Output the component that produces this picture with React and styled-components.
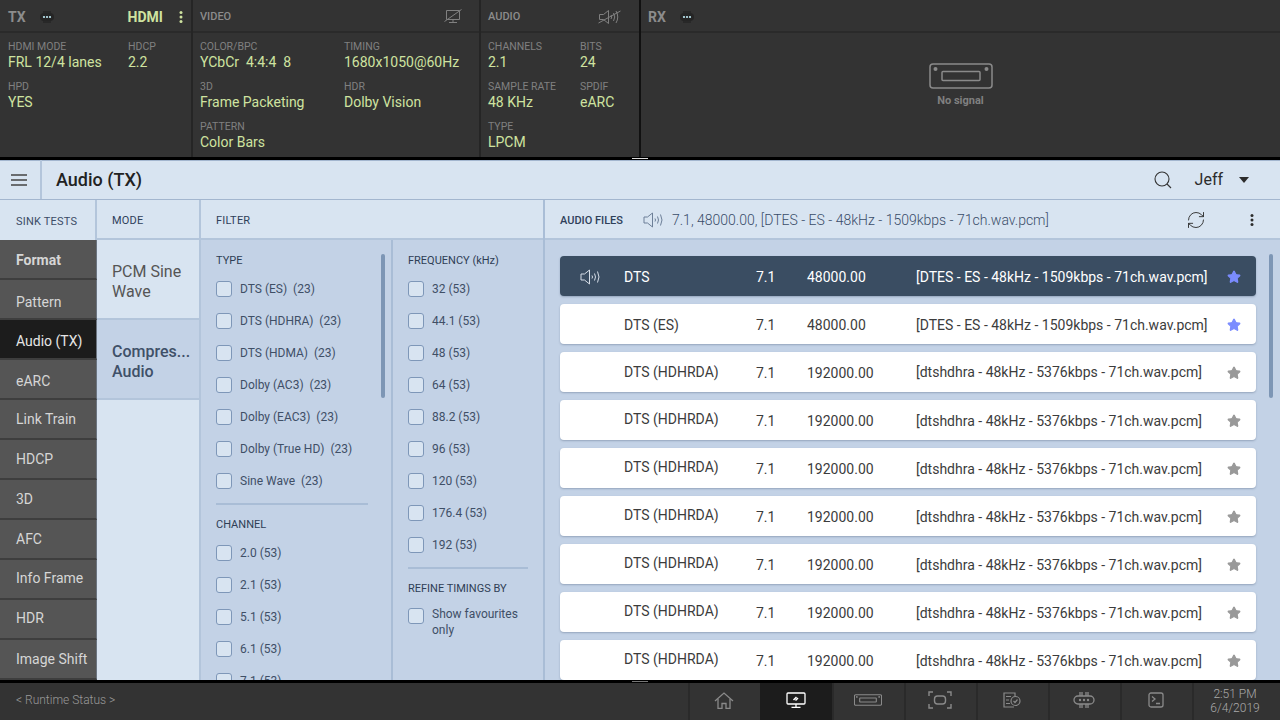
import styled, { createGlobalStyle } from "styled-components";
import { RefreshCw, Star } from "lucide-react";

const GlobalStyle = createGlobalStyle`
  html, body {
    margin: 0;
    padding: 0;
    background: #333;
  }
  body {
    font-family: Roboto, "Liberation Sans", sans-serif;
  }
  * {
    box-sizing: border-box;
  }
`;

const sinkTests = [
  { name: "Format", bold: true, shift: 1 },
  { name: "Pattern", shift: 3 },
  { name: "Audio (TX)", active: true, shift: 2 },
  { name: "eARC", shift: 2 },
  { name: "Link Train", shift: 0 },
  { name: "HDCP", shift: 0 },
  { name: "3D", shift: 0 },
  { name: "AFC", shift: 0 },
  { name: "Info Frame", shift: -1 },
  { name: "HDR", shift: -1 },
  { name: "Image Shift", shift: 0 },
];

const typeFilters = ["DTS (ES)  (23)", "DTS (HDHRA)  (23)", "DTS (HDMA)  (23)", "Dolby (AC3)  (23)", "Dolby (EAC3)  (23)", "Dolby (True HD)  (23)", "Sine Wave  (23)"];
const channelFilters = ["2.0 (53)", "2.1 (53)", "5.1 (53)", "6.1 (53)", "7.1 (53)"];
const freqFilters = ["32 (53)", "44.1 (53)", "48 (53)", "64 (53)", "88.2 (53)", "96 (53)", "120 (53)", "176.4 (53)", "192 (53)"];

const hdhrda = {
  name: "DTS (HDHRDA)",
  freq: "192000.00",
  file: "[dtshdhra - 48kHz - 5376kbps - 71ch.wav.pcm]",
};

const files = [
  { name: "DTS", freq: "48000.00", file: "[DTES - ES - 48kHz - 1509kbps - 71ch.wav.pcm]", selected: true, fav: true, lift: 0 },
  { name: "DTS (ES)", freq: "48000.00", file: "[DTES - ES - 48kHz - 1509kbps - 71ch.wav.pcm]", fav: true, lift: 0 },
  { ...hdhrda, lift: 2 },
  { ...hdhrda, lift: 4 },
  { ...hdhrda, lift: 4 },
  { ...hdhrda, lift: 4 },
  { ...hdhrda, lift: 4 },
  { ...hdhrda, lift: 4 },
  { ...hdhrda, lift: 4 },
];

/* drawings */
const ChipIcon = () => (
  <svg width="20" height="14" viewBox="0 0 20 14">
    <path d="M7 1v3M9 1v3M11 1v3M13 1v3M7 10v3M9 10v3M11 10v3M13 10v3" stroke="#222" strokeWidth="1.2" />
    <rect x="3" y="3" width="14" height="8" rx="4" fill="#252525" />
    <circle cx="7" cy="7" r="1.1" fill="#bfeaf5" />
    <circle cx="10" cy="7" r="1.1" fill="#bfeaf5" />
    <circle cx="13" cy="7" r="1.1" fill="#bfeaf5" />
  </svg>
);

const Kebab = ({ color }) => (
  <KebabSvg width="4" height="12" viewBox="0 0 4 12" fill={color}>
    <circle cx="2" cy="1.500" r="1.500" />
    <circle cx="2" cy="6" r="1.500" />
    <circle cx="2" cy="10.500" r="1.500" />
  </KebabSvg>
);

const MenuIcon = () => (
  <svg width="16" height="12" viewBox="0 0 16 12" stroke="#444" strokeWidth="1.500">
    <path d="M0 1h16M0 6h16M0 11h16" />
  </svg>
);

const SearchIcon = () => (
  <svg width="18" height="18" viewBox="0 0 18 18" fill="none" stroke="#333" strokeWidth="1.100">
    <circle cx="8" cy="8" r="7" />
    <path d="M13 13l4 4" />
  </svg>
);

const MutedMonitor = () => (
  <svg width="18" height="15" viewBox="0 0 18 15" fill="none" stroke="#808080" strokeWidth="1">
    <path d="M15.500 1.500H2.500v9h13z" />
    <path d="M9 10.500v3M5 13.500h8" />
    <path d="M0.500 12.500L17.500 0.500" />
  </svg>
);

const MutedSpeaker = () => (
  <svg width="23" height="16" viewBox="0 0 23 16" fill="none" stroke="#808080" strokeWidth="1">
    <path d="M1.500 5.500h4L10.500 1.500v13l-5-4h-4z" />
    <path d="M13 6q1.500 2 0 4M15.500 4q2.500 4 0 8M18 2q3.500 6 0 12" />
    <path d="M0.500 14L22.500 2" />
  </svg>
);

const Speaker = ({ color }) => (
  <svg width="22" height="16" viewBox="0 0 22 16" fill="none" stroke={color} strokeWidth="1">
    <path d="M1 5h3.500L9.500 1v14l-5-4H1z" />
    <path d="M12 6.500q1 1.500 0 3M14.500 4.500q2 3.500 0 7M17.500 2.500q3 5.500 0 11" />
  </svg>
);

const HdmiPort = ({ width, height, stroke }) => (
  <svg width={width} height={height} viewBox="0 0 64 26" fill="none" stroke="#8a8a8a" strokeWidth={stroke}>
    <rect x="1" y="1" width="62" height="24" rx="3" />
    <rect x="13" y="8.500" width="38" height="9" rx="1" />
    <g fill="#8a8a8a" stroke="none">
      <circle cx="6.500" cy="6" r="2" />
      <circle cx="57.500" cy="6" r="2" />
    </g>
  </svg>
);

const HomeIcon = () => (
  <svg width="20" height="17" viewBox="0 0 20 17" fill="none" stroke="#8a8a8a" strokeWidth="1.300">
    <path d="M1 9l9-8 9 8" />
    <path d="M4 7v9.500h4v-5h4v5h4V7" />
  </svg>
);

const MonitorIcon = () => (
  <svg width="20" height="16" viewBox="0 0 20 16" fill="none" stroke="#fff" strokeWidth="1.300">
    <rect x="1" y="1" width="18" height="11" rx="1" />
    <path d="M10 12v3M5.500 15.300h9" />
    <path d="M7.500 8l3-3M9.500 8.500l2.500-2.500" strokeWidth="1.500" />
  </svg>
);

const CaptureIcon = () => (
  <svg width="24" height="18" viewBox="0 0 24 18" fill="none" stroke="#8a8a8a" strokeWidth="1.400">
    <path d="M1 5V1h4M19 1h4v4M23 13v4h-4M5 17H1v-4" />
    <rect x="6.500" y="5" width="11" height="8" rx="3" />
  </svg>
);

const ReportIcon = () => (
  <svg width="18" height="16" viewBox="0 0 18 16" fill="none" stroke="#8a8a8a" strokeWidth="1.200">
    <path d="M12 4V1H1v14h10" />
    <path d="M3 4.500h5M3 8h3M3 11.500h4" />
    <circle cx="12.500" cy="9" r="4.500" />
    <path d="M10.500 9l1.500 1.500 2.500-3" />
  </svg>
);

const PortIcon = () => (
  <svg width="22" height="18" viewBox="0 0 22 18" fill="none" stroke="#8a8a8a" strokeWidth="1.300">
    <path d="M7 1v4M9 1v4M13 1v4M15 1v4M7 13v4M9 13v4M13 13v4M15 13v4" />
    <rect x="1" y="5" width="20" height="8" rx="4" />
    <g fill="#8a8a8a" stroke="none">
      <circle cx="7" cy="9" r="1.200" />
      <circle cx="11" cy="9" r="1.200" />
      <circle cx="15" cy="9" r="1.200" />
    </g>
  </svg>
);

const TerminalIcon = () => (
  <svg width="16" height="16" viewBox="0 0 16 16" fill="none" stroke="#8a8a8a" strokeWidth="1.300">
    <rect x="1" y="1" width="14" height="14" rx="2" />
    <path d="M4 4.500L7 7 4 9.500M8 11.500h4" />
  </svg>
);

const CaretDown = () => (
  <svg width="10" height="6" viewBox="0 0 10 6" fill="#2c2c2c">
    <path d="M0 0h10L5 6z" />
  </svg>
);

const App = () => (
  <Page>
    <GlobalStyle />
    <StatusPanel>
      <StatusColumn $width={191}>
        <StatusHead $pad={8} $end={8}>
          <PortName>TX</PortName>
          <ChipSlot>
            <ChipIcon />
          </ChipSlot>
          <HdmiTag>HDMI</HdmiTag>
          <Kebab color="#cfe3a0" />
        </StatusHead>
        <InfoGrid $pad={8} $first={120}>
          <Info label="HDMI MODE" value="FRL 12/4 lanes" />
          <Info label="HDCP" value="2.2" />
          <Info label="HPD" value="YES" />
        </InfoGrid>
      </StatusColumn>
      <StatusColumn $width={288} $line="#252525">
        <StatusHead $pad={7} $end={17}>
          <SectionName>VIDEO</SectionName>
          <MutedMonitor />
        </StatusHead>
        <InfoGrid $pad={7} $first={144}>
          <Info label="COLOR/BPC" value="YCbCr  4:4:4  8" />
          <Info label="TIMING" value="1680x1050@60Hz" />
          <Info label="3D" value="Frame Packeting" />
          <Info label="HDR" value="Dolby Vision" />
          <Info label="PATTERN" value="Color Bars" />
        </InfoGrid>
      </StatusColumn>
      <StatusColumn $width={160} $line="#252525">
        <StatusHead $pad={7} $end={18}>
          <SectionName>AUDIO</SectionName>
          <MutedSpeaker />
        </StatusHead>
        <InfoGrid $pad={7} $first={92}>
          <Info label="CHANNELS" value="2.1" />
          <Info label="BITS" value="24" />
          <Info label="SAMPLE RATE" value="48 KHz" />
          <Info label="SPDIF" value="eARC" />
          <Info label="TYPE" value="LPCM" />
        </InfoGrid>
      </StatusColumn>
      <StatusColumn $width={641} $line="#111">
        <StatusHead $pad={7} $end={17}>
          <PortName>RX</PortName>
          <ChipSlot>
            <ChipIcon />
          </ChipSlot>
        </StatusHead>
        <NoSignal>
          <HdmiPort width={64} height={26} stroke={1.500} />
          <NoSignalText>No signal</NoSignalText>
        </NoSignal>
      </StatusColumn>
      <Handle $color="#ddd" />
    </StatusPanel>

    <Main>
      <TitleBar>
        <MenuButton>
          <MenuIcon />
        </MenuButton>
        <Title>Audio (TX)</Title>
        <SearchIcon />
        <UserName>Jeff</UserName>
        <CaretDown />
      </TitleBar>

      <Columns>
        <SinkColumn>
          <SinkHead>SINK TESTS</SinkHead>
          {sinkTests.map((t) => (
            <SinkItem key={t.name} $active={t.active} $bold={t.bold} $shift={t.shift}>
              {t.name}
            </SinkItem>
          ))}
        </SinkColumn>

        <ModeColumn>
          <ColumnHead>MODE</ColumnHead>
          <ModeItem>PCM Sine Wave</ModeItem>
          <ModeItem $active>
            Compres...
            <br />
            Audio
          </ModeItem>
        </ModeColumn>

        <FilterColumn>
          <ColumnHead>FILTER</ColumnHead>
          <FilterPanes>
            <FilterPane $width={192}>
              <GroupTitle>TYPE</GroupTitle>
              {typeFilters.map((f) => (
                <CheckRow key={f} label={f} />
              ))}
              <GroupDivider $width={152} />
              <GroupTitle>CHANNEL</GroupTitle>
              {channelFilters.map((f) => (
                <CheckRow key={f} label={f} />
              ))}
              <ScrollThumb $right={6} />
            </FilterPane>
            <FilterPane $width={150}>
              <GroupTitle>FREQUENCY (kHz)</GroupTitle>
              {freqFilters.map((f) => (
                <CheckRow key={f} label={f} />
              ))}
              <GroupDivider $width={120} />
              <GroupTitle>REFINE TIMINGS BY</GroupTitle>
              <FavRow>
                <CheckBox />
                <FavText>Show favourites only</FavText>
              </FavRow>
            </FilterPane>
          </FilterPanes>
        </FilterColumn>

        <FilesColumn>
          <FilesHead>
            <HeadLabel>AUDIO FILES</HeadLabel>
            <Speaker color="#6d7f98" />
            <NowPlaying>7.1, 48000.00, [DTES - ES - 48kHz - 1509kbps - 71ch.wav.pcm]</NowPlaying>
            <RefreshSlot>
              <RefreshCw size={20} strokeWidth={1.1} color="#2c2c2c" />
            </RefreshSlot>
            <Kebab color="#2c2c2c" />
          </FilesHead>
          <FileList>
            {files.map((f, i) => (
              <FileRow key={i} $selected={f.selected}>
                <SpeakerCell>{f.selected && <Speaker color="#d6dee8" />}</SpeakerCell>
                <NameCell $lift={f.lift}>{f.name}</NameCell>
                <span>7.1</span>
                <span>{f.freq}</span>
                <FileCell $lift={i === 2 ? f.lift : 0}>{f.file}</FileCell>
                <StarCell>
                  <Star size={14} fill={f.fav ? "#7b8cff" : "#999"} color={f.fav ? "#7b8cff" : "#999"} />
                </StarCell>
              </FileRow>
            ))}
            <ScrollThumb $right={7} />
          </FileList>
        </FilesColumn>
      </Columns>
      <Handle $color="#777" />
    </Main>

    <Footer>
      <RuntimeStatus>&lt; Runtime Status &gt;</RuntimeStatus>
      <NavCell><HomeIcon /></NavCell>
      <NavCell $active><MonitorIcon /></NavCell>
      <NavCell><HdmiPort width={28} height={12} stroke={2.600} /></NavCell>
      <NavCell><CaptureIcon /></NavCell>
      <NavCell><ReportIcon /></NavCell>
      <NavCell><PortIcon /></NavCell>
      <NavCell><TerminalIcon /></NavCell>
      <Clock>
        2:51 PM
        <br />
        6/4/2019
      </Clock>
    </Footer>
  </Page>
);

const Info = ({ label, value }) => (
  <InfoCell>
    <InfoLabel>{label}</InfoLabel>
    <InfoValue>{value}</InfoValue>
  </InfoCell>
);

const CheckRow = ({ label }) => (
  <CheckLine>
    <CheckBox />
    <CheckText>{label}</CheckText>
  </CheckLine>
);

const KebabSvg = styled.svg`
  flex: none;
`;

const Page = styled.div`
  width: 1280px;
  height: 720px;
  display: flex;
  flex-direction: column;
  overflow: hidden;
`;

const StatusPanel = styled.div`
  position: relative;
  height: 160px;
  flex: none;
  display: flex;
  background: #333;
  border-bottom: 3px solid #000;
`;

const StatusColumn = styled.div`
  width: ${(p) => p.$width}px;
  flex: none;
  display: flex;
  flex-direction: column;
  border-left: ${(p) => (p.$line ? `2px solid ${p.$line}` : "0")};
`;

const StatusHead = styled.div`
  height: 33px;
  flex: none;
  display: flex;
  align-items: center;
  padding: 2px ${(p) => p.$end}px 0 ${(p) => p.$pad}px;
  border-bottom: 2px solid #2a2a2a;
`;

const PortName = styled.span`
  font-size: 14px;
  font-weight: 700;
  color: #8c8c8c;
`;

const ChipSlot = styled.span`
  display: flex;
  width: 20px;
  margin-left: 11px;
`;

const HdmiTag = styled.span`
  font-size: 14px;
  font-weight: 700;
  color: #cfe3a0;
  margin-left: 71px;
  margin-right: 16px;
`;

const SectionName = styled.span`
  flex: 1;
  font-size: 11px;
  font-weight: 500;
  color: #8c8c8c;
`;

const InfoGrid = styled.div`
  display: grid;
  grid-template-columns: ${(p) => p.$first}px 1fr;
  grid-auto-rows: 40px;
  padding: 8px 0 0 ${(p) => p.$pad}px;
`;

const InfoCell = styled.div`
  display: flex;
  flex-direction: column;
`;

const InfoLabel = styled.span`
  font-size: 10.5px;
  line-height: 12px;
  color: #808080;
`;

const InfoValue = styled.span`
  font-size: 14px;
  line-height: 18px;
  color: #cfe3a0;
  white-space: pre;
`;

const NoSignal = styled.div`
  display: flex;
  flex-direction: column;
  align-items: center;
  padding-top: 30px;
`;

const NoSignalText = styled.span`
  margin-top: 5px;
  font-size: 11px;
  font-weight: 700;
  color: #808080;
`;

const Handle = styled.span`
  position: absolute;
  left: 632px;
  bottom: -2px;
  width: 16px;
  height: 1px;
  background: ${(p) => p.$color};
`;

const Main = styled.div`
  position: relative;
  flex: 1;
  min-height: 0;
  display: flex;
  flex-direction: column;
  background: #d8e4f1;
`;

const TitleBar = styled.div`
  height: 40px;
  flex: none;
  display: flex;
  align-items: center;
  padding-right: 31px;
  border-bottom: 1px solid #a3b6cf;
  box-shadow: inset 0 1px 0 #a3b6cf;
`;

const MenuButton = styled.div`
  width: 42px;
  height: 39px;
  flex: none;
  display: flex;
  align-items: center;
  justify-content: center;
  padding-right: 2px;
  border-right: 2px solid #b3c5db;
`;

const Title = styled.h1`
  flex: 1;
  margin: 0 0 0 14px;
  font-size: 18px;
  font-weight: 500;
  color: #222;
`;

const UserName = styled.span`
  margin: 0 16px 0 23px;
  font-size: 16px;
  color: #2c2c2c;
`;

const Columns = styled.div`
  flex: 1;
  min-height: 0;
  display: flex;
`;

const ColumnHead = styled.div`
  height: 40px;
  flex: none;
  display: flex;
  align-items: center;
  padding: 2px 0 0 15px;
  font-size: 11px;
  letter-spacing: 0.2px;
  color: #2f405a;
  border-bottom: 2px solid #b3c5db;
`;

const SinkColumn = styled.div`
  width: 97px;
  flex: none;
  display: flex;
  flex-direction: column;
  overflow: hidden;
`;

const SinkHead = styled.div`
  height: 40px;
  flex: none;
  display: flex;
  align-items: center;
  padding: 3px 0 0 16px;
  font-size: 11px;
  letter-spacing: 0.2px;
  color: #3c4c66;
  border-right: 2px solid #b3c5db;
`;

const SinkItem = styled.div`
  height: 40px;
  flex: none;
  display: flex;
  align-items: center;
  padding-left: 16px;
  padding-top: ${(p) => Math.max(p.$shift, 0) * 2}px;
  padding-bottom: ${(p) => Math.max(-p.$shift, 0) * 2}px;
  font-size: 14px;
  font-weight: ${(p) => (p.$bold ? 700 : 400)};
  color: ${(p) => (p.$active ? "#e6e6e6" : "#d6d6d6")};
  background: ${(p) => (p.$active ? "#1c1c1c" : "#555")};
  border-bottom: 2px solid #3e3e3e;
  border-right: 1px solid #6b7480;
`;

const ModeColumn = styled.div`
  width: 104px;
  flex: none;
  display: flex;
  flex-direction: column;
  border-right: 2px solid #b3c5db;
`;

const ModeItem = styled.div`
  height: 80px;
  flex: none;
  display: flex;
  align-items: center;
  padding: 6px 3px 0 15px;
  font-size: 16px;
  line-height: 20px;
  font-weight: ${(p) => (p.$active ? 500 : 400)};
  color: ${(p) => (p.$active ? "#3f5068" : "#555")};
  background: ${(p) => (p.$active ? "#c3d2e6" : "transparent")};
  border-bottom: 2px solid #b3c5db;
`;

const FilterColumn = styled.div`
  width: 344px;
  flex: none;
  display: flex;
  flex-direction: column;
  min-height: 0;
  border-right: 2px solid #a9bdd6;
`;

const FilterPanes = styled.div`
  flex: 1;
  min-height: 0;
  display: flex;
  background: #c3d2e6;
`;

const FilterPane = styled.div`
  position: relative;
  width: ${(p) => p.$width}px;
  flex: none;
  overflow: hidden;
  padding: 13px 0 0 15px;
  &:first-child {
    border-right: 2px solid #a9bdd6;
  }
`;

const GroupTitle = styled.div`
  font-size: 11px;
  line-height: 16px;
  font-weight: 400;
  color: #2f3e55;
  margin-bottom: 4px;
`;

const CheckLine = styled.div`
  height: 32px;
  display: flex;
  align-items: center;
  gap: 8px;
`;

const CheckBox = styled.span`
  width: 16px;
  height: 16px;
  flex: none;
  border-radius: 3px;
  background: #d8e4f1;
  border: 1px solid #7e97b8;
`;

const CheckText = styled.span`
  font-size: 12px;
  color: #3f4f66;
  white-space: pre;
`;

const GroupDivider = styled.div`
  width: ${(p) => p.$width}px;
  height: 2px;
  margin: 6px 0 12px;
  background: #a9bdd6;
`;

const FavRow = styled.div`
  display: flex;
  gap: 8px;
  padding-top: 7px;
`;

const FavText = styled.span`
  margin-top: -2px;
  font-size: 12px;
  line-height: 16px;
  color: #3f4f66;
  width: 96px;
`;

const ScrollThumb = styled.span`
  position: absolute;
  top: 14px;
  right: ${(p) => p.$right}px;
  width: 4px;
  height: 144px;
  border-radius: 2px;
  background: #7d96b5;
`;

const FilesColumn = styled.div`
  flex: 1;
  min-width: 0;
  display: flex;
  flex-direction: column;
`;

const FilesHead = styled.div`
  height: 40px;
  flex: none;
  display: flex;
  align-items: center;
  padding: 2px 26px 0 15px;
  border-bottom: 2px solid #b3c5db;
`;

const HeadLabel = styled.span`
  font-size: 11px;
  font-weight: 500;
  color: #2f405a;
  margin-right: 20px;
`;

const NowPlaying = styled.span`
  flex: 1;
  margin-left: 7px;
  font-size: 14px;
  font-weight: 300;
  color: #3a4d69;
`;

const RefreshSlot = styled.span`
  display: flex;
  margin-right: 44px;
`;

const FileList = styled.div`
  position: relative;
  flex: 1;
  min-height: 0;
  overflow: hidden;
  display: flex;
  flex-direction: column;
  gap: 8px;
  padding: 16px 0 0 15px;
  background: #c3d2e6;
`;

const FileRow = styled.div`
  width: 696px;
  height: 40px;
  flex: none;
  display: grid;
  grid-template-columns: 64px 132px 51px 109px 1fr 44px;
  align-items: center;
  padding-top: 2px;
  border-radius: 4px;
  font-size: 14px;
  color: ${(p) => (p.$selected ? "#fff" : "#3c3c3c")};
  background: ${(p) => (p.$selected ? "#3a4d62" : "#fff")};
  box-shadow: 0 1px 2px rgba(60, 80, 110, 0.35);
`;

const SpeakerCell = styled.span`
  display: flex;
  padding-left: 20px;
`;

const NameCell = styled.span`
  padding-bottom: ${(p) => p.$lift}px;
`;

const FileCell = styled.span`
  white-space: nowrap;
  padding-bottom: ${(p) => p.$lift}px;
`;

const StarCell = styled.span`
  display: flex;
  justify-content: center;
`;

const Footer = styled.div`
  height: 40px;
  flex: none;
  display: flex;
  align-items: center;
  background: #333;
  border-top: 3px solid #000;
`;

const RuntimeStatus = styled.span`
  width: 688px;
  flex: none;
  padding: 0 0 3px 16px;
  font-size: 12px;
  font-weight: 300;
  color: #999;
`;

const NavCell = styled.div`
  width: 72px;
  height: 37px;
  flex: none;
  display: flex;
  align-items: center;
  justify-content: center;
  padding-bottom: 3px;
  background: ${(p) => (p.$active ? "#1c1c1c" : "transparent")};
  box-shadow: inset 2px 0 0 ${(p) => (p.$active ? "#1c1c1c" : "#2a2a2a")};
`;

const Clock = styled.div`
  flex: 1;
  height: 37px;
  display: flex;
  flex-direction: column;
  justify-content: center;
  padding: 0 2px 2px 0;
  text-align: center;
  font-size: 12px;
  font-weight: 300;
  line-height: 14px;
  color: #aaa;
  box-shadow: inset 2px 0 0 #2a2a2a;
`;

export default App;
